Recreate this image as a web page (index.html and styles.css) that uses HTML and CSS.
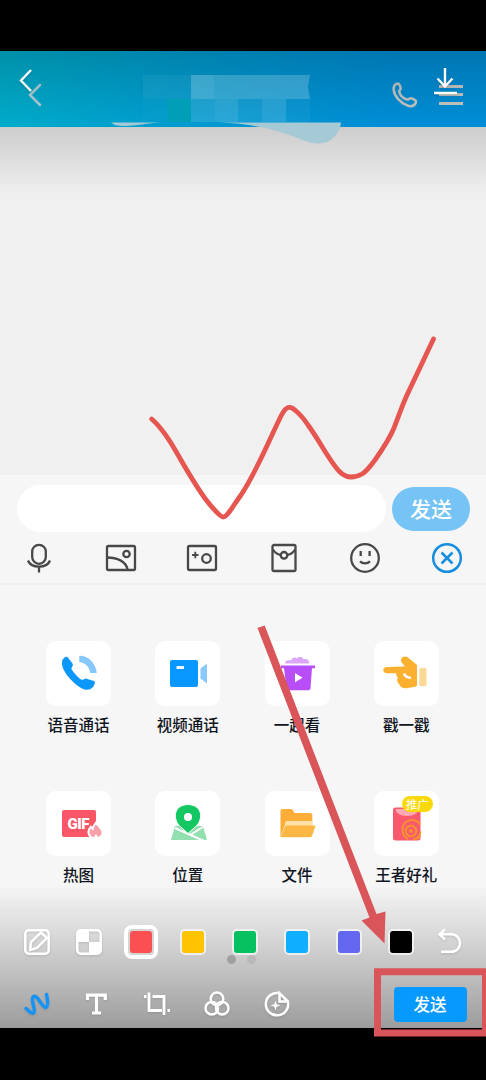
FILE: index.html
```html
<!DOCTYPE html>
<html lang="zh-CN">
<head>
<meta charset="utf-8">
<title>涂鸦</title>
<link rel="stylesheet" href="styles.css">
</head>
<body>
<div class="phone">
  <div class="status"></div>
  <header class="header">
    <svg class="back" viewBox="0 0 14 24"><path d="M12 2 2 12l10 10"/></svg>
    <div class="header-actions">
      <svg class="call" viewBox="0 0 26 26"><path d="M4.500 1.800C6 1.200 7 2 7.600 3.200c.7 1.500 1.400 2.800.9 3.800-.5 1-1.500 1.400-1.200 2.700.7 3.300 4 6.600 7.600 7.800 1.500.5 1.900-.7 3-1.100 1.300-.4 2.700.4 4.300 1.200 1.800.9 2.300 2.200 1.200 3.900-1.700 2.700-5 3.200-8.200 1.900C8.400 20.700 2.500 14.500 1.700 7.800 1.400 5 2.200 2.700 4.500 1.800Z"/></svg>
      <div class="menu"><i></i><i></i><i></i></div>
    </div>
  </header>
  <main class="chat"></main>
  <section class="panel">
    <div class="compose"><div class="field"></div><div class="send">发送</div></div>
    <div class="tools">
      <svg viewBox="0 0 32 32"><rect x="9.200" y="2.800" width="13.600" height="19" rx="6.800"/><path d="M5 18.500C8 26.700 24 26.700 27 18.500M16 25v5.500"/></svg>
      <svg viewBox="0 0 32 32"><rect x="2" y="4" width="28" height="24" rx="1.500"/><circle cx="21.500" cy="12" r="3.200"/><path d="M2 15.500C11.500 15.500 21.500 19 22.500 28"/></svg>
      <svg viewBox="0 0 32 32"><rect x="2" y="4" width="28" height="24" rx="1.500"/><circle cx="20.500" cy="16.500" r="4.300"/><path stroke-width="1.800" d="M9.300 9.800v6.400M6.100 13h6.400"/></svg>
      <svg viewBox="0 0 32 32"><rect x="4.500" y="3" width="23" height="26" rx="1.500"/><path d="M5 7.500c2 3.500 5 5 7.500 5.300M27 7.500c-2 3.500-4.500 5-7.500 5.300"/><circle cx="16" cy="13.300" r="3.300"/></svg>
      <svg viewBox="0 0 32 32"><circle cx="16" cy="16" r="13.800"/><path d="M11.700 9v5M20.600 9v5M11 19.300c2.800 2.700 7.200 2.700 10 0"/></svg>
      <svg class="close" viewBox="0 0 32 32"><circle cx="16" cy="16" r="13.800"/><path d="m10.500 10.500 11 11m0-11-11 11"/></svg>
    </div>
    <div class="apps">
      <div class="app"><div class="tile"><svg viewBox="0 0 65 65">
        <path fill="#0c98fb" d="M16 20.500c.5-3 4-5.800 5.500-4.500l4.800 6.200c1 1.400.7 2.600-.4 4-1.300 1.600.3 3 2.800 6.200 3.300 3.700 6.200 6.700 8.300 6.300 1.600-.4 2.100-1.600 3.700-1l7.200 2.400c2.500 1-.2 7-3.900 8.200-4.500 1.800-11-1.400-17.800-8.300C19.500 33.300 15.200 26.200 16 20.500Z"/>
        <path fill="#87c8fa" d="M33.300 14.800C42 14.500 50 22 50.800 32h-6.600c-.8-6-4.700-10.200-10.900-11Z"/></svg></div><span>语音通话</span></div>
      <div class="app"><div class="tile"><svg viewBox="0 0 65 65">
        <rect x="15" y="19" width="28" height="27" rx="2" fill="#0797fe"/><rect x="21.500" y="25" width="7.500" height="3" fill="#edf8ff"/><path fill="#89c9fb" d="M45.500 27.500 52 22.500v20l-6.500-5Z"/></svg></div><span>视频通话</span></div>
      <div class="app"><div class="tile"><svg viewBox="0 0 65 65">
        <path fill="#dba5fa" d="M20 22.500c0-3 3-4 6-3 1-4 5-3.500 6-2 1.500-2 6-2 6.500 1 3-1.500 6 .5 6 4Z"/><path fill="#b84ef7" d="M16 24.500h34v2.700h-3L45.500 47c-.2 1.500-1 2.300-2.500 2.300H24c-1.500 0-2.300-.8-2.500-2.300L19 27.200h-3Z"/><path fill="#fff" d="m30 32 7.500 4.800-7.500 4.500Z"/></svg></div><span>一起看</span></div>
      <div class="app"><div class="tile"><svg viewBox="0 0 65 65">
        <path fill="#fbb02f" d="M13 26c-5 0-5 6.200 0 6.200h9.300c-.5 2 .7 3 1.400 4l-.5 2.300c-.4 2 .6 3.400 1.800 4.300 1.500 4.500 5.800 4.800 8.500 4.300l7.500-1.300c1.500-.2 2-.8 2-2V25c0-1-.5-1.500-1-2l-8.700-7c-4.200-2.200-8 2.200-5.500 5.500l3 4Z"/><path stroke="#fff" stroke-width="2.500" fill="none" d="M30 32.500c1 3 3.500 4.300 7 4.300"/><rect x="45.300" y="27" width="7.200" height="18" rx="1.500" fill="#fcd795"/></svg></div><span>戳一戳</span></div>
      <div class="app"><div class="tile"><svg viewBox="0 0 65 65">
        <rect x="16" y="19" width="34" height="27" rx="2" fill="#f95768"/><text class="gif" x="21.500" y="38" textLength="22">GIF</text><path stroke="#fff" stroke-width="2" fill="#f9a0aa" d="M50 31.500c-2 2.500-3 4-3.300 6.300l-2-2c-2.500 3-3.300 6.800-.2 9.800 3 2.800 8.500 2.600 11.200-.6 3-4-.5-7.200-5.700-13.500Z"/><path fill="#fff" d="m50 43-3 4h6Z"/></svg></div><span>热图</span></div>
      <div class="app"><div class="tile"><svg viewBox="0 0 65 65">
        <path fill="#92dfb0" d="M20 35h28l4 14H16Z"/><path stroke="#fff" stroke-width="2" d="m20 37 29 13M48 36 35 44"/><path fill="#15c763" stroke="#fff" stroke-width="1" d="M33 13.500c-16 .5-15.500 17-6 23.500l6 5.500 6-5.500c9.500-6.500 10-23-6-23.500Z"/><circle cx="33" cy="26" r="4" fill="#fff"/></svg></div><span>位置</span></div>
      <div class="app"><div class="tile"><svg viewBox="0 0 65 65">
        <path fill="#fcae38" d="M15.500 20q0-2 2-2H26q1.500 0 2.500 2l1 2H45q2.300 0 2.300 2v11H21l-4 11h-1.500Z"/><path fill="#ffe0a8" d="M21 30h26.300v5H22l-4 10h-2Z"/><path fill="#fcb745" d="M22 34.500h28q.7 0 .4.800L47 45q-.3 1.300-1.800 1.300H17.500q-1.500 0-1-1.300L20 36q.4-1.500 2-1.500Z"/></svg></div><span>文件</span></div>
      <div class="app"><div class="tile"><svg viewBox="0 0 65 65">
        <rect x="19" y="16.500" width="27.500" height="33" rx="2.500" fill="#f9596d"/><path fill="#fbaab4" d="M21.500 18h22.800c.4 9-22.500 9.500-22.800 0Z"/><g fill="none" stroke="#f69131" stroke-width="2"><path d="M46 33.500a9.500 9.500 0 0 0-17.500 4.500c0 4.500 1.500 8 5.500 10M39 48.500a9 9 0 0 0 7.500-8M43 48l3.500-3"/><circle cx="37" cy="40" r="5.300"/></g><circle cx="37" cy="40" r="2" fill="#f69131"/></svg><b class="badge">推广</b></div><span>王者好礼</span></div>
    </div>
  </section>
  <footer class="system"></footer>

  <div class="scrim scrim-top"></div>
  <svg class="mask" viewBox="0 0 486 160">
    <g fill="#fff"><path opacity=".05" d="M143 75h48v24h-48z"/><path opacity=".24" d="M191 75h23v24h-23z"/><path opacity=".2" d="M214 75h96l-2 12 2 12h-96z"/><path opacity=".02" d="M143 99h24v23h-24z"/><path opacity=".12" d="M191 99h24v23h-24z"/><path opacity=".16" d="M215 99h23v23h-23z"/><path opacity=".08" d="M238 99h24v23h-24z"/><path opacity=".15" d="M262 99h24v23h-24z"/><path opacity=".04" d="M286 99h24v23h-24z"/></g>
    <path fill="#009fb8" d="M167 99h24v23h-24z"/>
    <path fill="#a6c9d6" d="M111 122.500h51c-16 .5-25 3.500-38 3.500-7 0-10-1-13-3.500ZM209 122.500h132c-1 10-9 21-22 21-8 0-14-2.500-20-5-17-7-33-11-54-14-10-1.500-20-2-36-2Z"/>
  </svg>
  <nav class="top-controls">
    <svg class="exit" viewBox="0 0 16 26"><path d="M13 3 3 13.500 13 24"/></svg>
    <svg class="download" viewBox="0 0 26 30"><path d="M13 2v18.500m-7.500-8 7.500 8 7.500-8M2 27h23"/></svg>
  </nav>

  <div class="scrim scrim-bottom">
    <div class="palette">
      <svg viewBox="0 0 30 30"><rect x="3.300" y="3.300" width="23.400" height="23.400" rx="3.500"/><path d="m8 23 1-8L19 5.500l6 5.500L15 21Z"/></svg>
      <svg viewBox="0 0 30 30"><rect x="3.300" y="3.300" width="23.400" height="23.400" rx="3.500"/><path class="solid" d="M4 4h11v11H4zM15 15h11v11H15z"/></svg>
      <div class="swatch red"><i></i></div>
      <div class="swatch yellow"><i></i></div>
      <div class="swatch green"><i></i></div>
      <div class="swatch blue"><i></i></div>
      <div class="swatch violet"><i></i></div>
      <div class="swatch black"><i></i></div>
      <svg viewBox="0 0 30 30"><path d="M10 2.500 4.500 7.300 10 12.500M4.500 7.300H16c12 0 12 17.500 0 17.500H6"/></svg>
    </div>
    <div class="dots"><i></i><i></i></div>
    <div class="edit-tools">
      <svg class="brush" viewBox="0 0 30 30"><path d="M4 19.500C7 21.500 8.500 25 11.500 24C15 21.500 7.500 10 11.500 7.500C15.500 5 20 18.500 24 18.500C26.500 17 25.500 10 24.500 5.500"/></svg>
      <svg viewBox="0 0 30 30"><path class="letter" d="M5.500 11V6.200h17.800V11M14.500 6.200v18M10 24h9"/></svg>
      <svg viewBox="0 0 30 30"><path class="crop" d="M7 3.500V21.500H20M10.500 7.500H22V26M2 7.500h2.500M25.500 21.500h2.500"/></svg>
      <svg viewBox="0 0 30 30"><circle cx="15" cy="9.800" r="6.300"/><circle cx="9.800" cy="19.200" r="6.300"/><circle cx="20.200" cy="19.200" r="6.300"/></svg>
      <svg viewBox="0 0 30 30"><path d="M17.500 4.200A11.200 11.200 0 1 0 25.900 12.500L17.500 4.200v8.300h8.400"/><path class="solid star" d="m13.500 11.500 1.200 3.800 3.800 1.200-3.800 1.200-1.200 3.800-1.200-3.800-3.800-1.200 3.800-1.200Z"/></svg>
      <div class="submit">发送</div>
    </div>
  </div>

  <svg class="drawing" viewBox="0 0 486 1080">
    <path class="doodle" d="M151.700 419C161 427 165 434 171 443C183 463 194 484 207 501C214 510 221 517 223.500 517C227 517 233 506 241 495C258 469 270 438 281 416C286 406 290 405 296 411Q302 416 308 425C321 443 330 462 340 472Q349 481 362 474C367 471 371 465 375 460C382 450 389 440 394 428C399 415 402 406 407 395L433.500 339"/>
    <path class="arrow" d="m257.500 628 7.200-2.500L376.500 914l9-2.500-1 32-23-23 8-3Z"/>
    <path class="frame" d="M377.500 971.800H485.500V1033H377.500Z"/>
  </svg>
</div>
</body>
</html>
```
FILE: styles.css
```css
* { box-sizing: border-box; }
body { margin: 0; background: #000; font-family: "Noto Sans CJK SC", sans-serif; }
svg { display: block; fill: none; }
.phone { position: relative; width: 486px; height: 1080px; overflow: hidden; display: flex; flex-direction: column; background: #000; }
.status { height: 51px; background: #000; }
.header { height: 76px; padding: 11px 23px 0 28px; display: flex; align-items: center; justify-content: space-between; background: linear-gradient(100deg, #00cbed 0%, #00b6f4 40%, #00a6fb 80%); }
.back { width: 14px; height: 24px; stroke: #fff; stroke-width: 2.500; stroke-linecap: round; opacity: .8; }
.header-actions { display: flex; align-items: center; gap: 21px; }
.call { width: 26px; height: 26px; stroke: #f4eee4; stroke-width: 2.500; opacity: .95; }
.menu { width: 24px; display: flex; flex-direction: column; gap: 5.500px; }
.menu i { height: 3px; background: #f4eee4; opacity: .95; }
.chat { height: 348px; background: #f0f0f0; }
.panel { height: 553px; background: #f6f6f6; }
.compose { height: 64px; padding: 10px 16px 0 17px; display: flex; gap: 6px; }
.field { width: 369px; height: 47px; border-radius: 24px; background: #fff; }
.send { width: 78px; height: 44px; margin-top: 2px; border-radius: 22px; background: #76c4f6; color: #fff; font-size: 21px; font-weight: 500; line-height: 43px; text-align: center; }
.tools { height: 46px; padding: 3px 23px 0; display: flex; justify-content: space-between; border-bottom: 2px solid #efefef; }
.tools svg { width: 32px; height: 32px; stroke: #484848; stroke-width: 2.300; }
.tools .close { stroke: #168edf; stroke-width: 2.500; }
.apps { padding: 56px 25px 0 24px; display: grid; grid-template-columns: repeat(4, 1fr); row-gap: 55px; }
.app { height: 95px; display: flex; flex-direction: column; align-items: center; color: #101522; }
.tile { position: relative; width: 65px; height: 65px; border-radius: 10px; background: #fff; }
.tile svg { width: 65px; height: 65px; }
.app span { margin-top: 7px; font-size: 15.500px; font-weight: 500; line-height: 22px; white-space: nowrap; }
.gif { fill: #fff; font: 900 15px Roboto, sans-serif; }
.badge { position: absolute; top: 5px; left: 28px; width: 31px; height: 16px; border-radius: 8px; background: #f9d90b; color: #fff; font-size: 11.500px; font-weight: 400; line-height: 16px; text-align: center; white-space: nowrap; }
.system { height: 52px; background: #000; }
.mask { position: absolute; top: 0; left: 0; width: 486px; height: 160px; }
.scrim { position: absolute; left: 0; width: 486px; }
.scrim-top { top: 51px; height: 144px; background: linear-gradient(rgba(0,0,0,.29), rgba(0,0,0,.145) 53%, rgba(0,0,0,.1) 68%, rgba(0,0,0,0)); }
.top-controls { position: absolute; top: 66px; left: 18px; width: 440px; display: flex; justify-content: space-between; }
.top-controls svg { stroke: #fff; stroke-width: 2.400; filter: drop-shadow(0 1px 1px rgba(0,0,0,.2)); }
.exit { width: 16px; height: 26px; margin-top: 1px; }
.download { width: 26px; height: 30px; }
.scrim-bottom { top: 885px; height: 143px; padding: 37px 0 0 11px; background: linear-gradient(rgba(0,0,0,0), rgba(0,0,0,.12) 35%, rgba(0,0,0,.36)); border-bottom: 1px solid #999; }
.scrim-bottom svg { flex: none; width: 30px; height: 30px; stroke: #fff; stroke-width: 2.500; filter: drop-shadow(0 1px 1px rgba(0,0,0,.12)); }
.palette { height: 40px; display: grid; grid-template-columns: repeat(8, 52px) 45px; align-items: center; justify-items: center; }
.swatch { display: flex; align-items: center; justify-content: center; width: 26px; height: 26px; border: 2px solid rgba(255,255,255,.65); border-radius: 5px; }
.swatch i { flex: none; width: 22px; height: 22px; border-radius: 3px; }
.red { width: 34px; height: 34px; border: 4px solid #fff; border-radius: 8px; background: #d4d4d4; }
.red i { background: #fa5051; }
.yellow i { background: #ffc300; }
.green i { background: #07c160; }
.blue i { background: #10aeff; }
.violet i { background: #6467ef; }
.black i { background: #000; }
.dots { height: 10px; margin: -7px 0 0 215.500px; display: flex; gap: 11px; }
.dots i { width: 9px; height: 9px; border-radius: 50%; background: #a0a0a0; }
.dots i + i { background: #b9b9b9; }
.edit-tools { height: 40px; margin: 19px 0 0 11px; display: flex; align-items: center; gap: 30px; }
.scrim-bottom .brush { stroke: #1593f7; stroke-width: 3.500; stroke-linecap: round; }
.letter { stroke-width: 3.200; }
.crop { stroke-width: 2.800; }
.solid { fill: #fff; stroke: none; }
.submit { flex: none; width: 73px; height: 35px; margin-left: 71.500px; border-radius: 4px; background: #0899ff; color: #fff; font-size: 16.500px; font-weight: 500; line-height: 35px; text-align: center; }
.drawing { position: absolute; top: 0; left: 0; width: 486px; height: 1080px; }
.doodle { stroke: #e65650; stroke-width: 4.800; stroke-linecap: round; stroke-linejoin: round; }
.arrow { fill: #d9555a; }
.frame { stroke: #d9555a; stroke-width: 7; }
```
